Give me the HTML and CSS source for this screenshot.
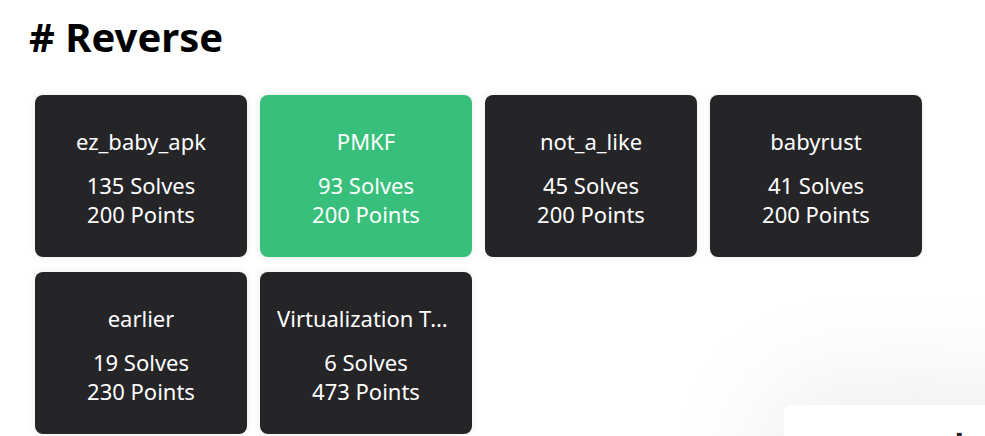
FILE: index.html
```html
<!DOCTYPE html>
<html>
<head>
<meta charset="utf-8">
<link rel="stylesheet" href="styles.css">
</head>
<body>
<main class="page">
  <h1 class="title"># Reverse</h1>
  <div class="grid">
    <div class="card"><div class="name">ez_baby_apk</div><div class="meta">135 Solves<br>200 Points</div></div>
    <div class="card solved"><div class="name">PMKF</div><div class="meta">93 Solves<br>200 Points</div></div>
    <div class="card"><div class="name">not_a_like</div><div class="meta">45 Solves<br>200 Points</div></div>
    <div class="card"><div class="name">babyrust</div><div class="meta">41 Solves<br>200 Points</div></div>
    <div class="card"><div class="name">earlier</div><div class="meta">19 Solves<br>230 Points</div></div>
    <div class="card"><div class="name">Virtualization Tutorial</div><div class="meta">6 Solves<br>473 Points</div></div>
  </div>
</main>
<div class="panel"><span class="panel-text">▪ ▘</span></div>
</body>
</html>
```
FILE: styles.css
```css
html, body {
  margin: 0;
  padding: 0;
  background: #fff;
  overflow: hidden;
  height: 436px;
}
body {
  font-family: "Noto Sans", "Open Sans", sans-serif;
  color: #000;
}
.page {
  padding: 12px 0 0 35px;
}
.title {
  margin: 0 0 0 -6px;
  font-size: 40px;
  line-height: 50px;
  font-weight: 700;
  letter-spacing: 0;
}
.grid {
  display: grid;
  grid-template-columns: repeat(4, 212px);
  grid-auto-rows: 162px;
  column-gap: 13px;
  row-gap: 15px;
  margin-top: 33px;
}
.card {
  background: #252528;
  border-radius: 8px;
  color: #fff;
  display: flex;
  flex-direction: column;
  align-items: center;
  justify-content: center;
  box-shadow: 0 0 8px rgba(0,0,0,0.08);
  padding: 7px 17px 0;
  text-align: center;
}
.card.solved {
  background: #37bf7b;
}
.name {
  font-size: 22px;
  line-height: 30px;
  max-width: 100%;
  white-space: nowrap;
  overflow: hidden;
  text-overflow: ellipsis;
  margin-top: -4px;
  margin-bottom: 15px;
}
.meta {
  font-size: 22px;
  line-height: 29px;
}
.panel {
  position: absolute;
  left: 784px;
  top: 405px;
  width: 260px;
  height: 200px;
  background: #fff;
  border-radius: 6px;
  box-shadow: 0 0 120px 20px rgba(0,0,0,0.07);
}
.panel-text {
  position: absolute;
  left: 166px;
  top: 26px;
  font-size: 12px;
  color: #222;
}
```
